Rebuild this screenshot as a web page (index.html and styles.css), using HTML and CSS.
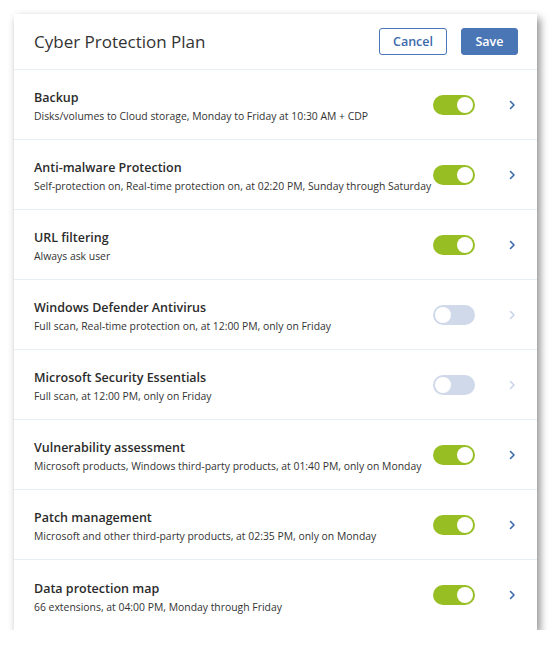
FILE: index.html
```html
<!DOCTYPE html>
<html>
<head>
<meta charset="utf-8">
<link rel="stylesheet" href="styles.css">
</head>
<body>
<div class="panel">
  <div class="header">
    <div class="title">Cyber Protection Plan</div>
    <div class="actions">
      <button class="btn btn-cancel">Cancel</button>
      <button class="btn btn-save">Save</button>
    </div>
  </div>
  <div class="row">
    <div class="info"><div class="name">Backup</div><div class="desc">Disks/volumes to Cloud storage, Monday to Friday at 10:30 AM + CDP</div></div>
    <div class="toggle on"><span class="knob"></span></div>
    <svg class="chev" viewBox="0 0 8 12"><path d="M2.5 2.5 L6 6 L2.5 9.5"/></svg>
  </div>
  <div class="row">
    <div class="info"><div class="name">Anti-malware Protection</div><div class="desc">Self-protection on, Real-time protection on, at 02:20 PM, Sunday through Saturday</div></div>
    <div class="toggle on"><span class="knob"></span></div>
    <svg class="chev" viewBox="0 0 8 12"><path d="M2.5 2.5 L6 6 L2.5 9.5"/></svg>
  </div>
  <div class="row">
    <div class="info"><div class="name">URL filtering</div><div class="desc">Always ask user</div></div>
    <div class="toggle on"><span class="knob"></span></div>
    <svg class="chev" viewBox="0 0 8 12"><path d="M2.5 2.5 L6 6 L2.5 9.5"/></svg>
  </div>
  <div class="row">
    <div class="info"><div class="name">Windows Defender Antivirus</div><div class="desc">Full scan, Real-time protection on, at 12:00 PM, only on Friday</div></div>
    <div class="toggle off"><span class="knob"></span></div>
    <svg class="chev dim" viewBox="0 0 8 12"><path d="M2.5 2.5 L6 6 L2.5 9.5"/></svg>
  </div>
  <div class="row">
    <div class="info"><div class="name">Microsoft Security Essentials</div><div class="desc">Full scan, at 12:00 PM, only on Friday</div></div>
    <div class="toggle off"><span class="knob"></span></div>
    <svg class="chev dim" viewBox="0 0 8 12"><path d="M2.5 2.5 L6 6 L2.5 9.5"/></svg>
  </div>
  <div class="row">
    <div class="info"><div class="name">Vulnerability assessment</div><div class="desc">Microsoft products, Windows third-party products, at 01:40 PM, only on Monday</div></div>
    <div class="toggle on"><span class="knob"></span></div>
    <svg class="chev" viewBox="0 0 8 12"><path d="M2.5 2.5 L6 6 L2.5 9.5"/></svg>
  </div>
  <div class="row">
    <div class="info"><div class="name">Patch management</div><div class="desc">Microsoft and other third-party products, at 02:35 PM, only on Monday</div></div>
    <div class="toggle on"><span class="knob"></span></div>
    <svg class="chev" viewBox="0 0 8 12"><path d="M2.5 2.5 L6 6 L2.5 9.5"/></svg>
  </div>
  <div class="row last">
    <div class="info"><div class="name">Data protection map</div><div class="desc">66 extensions, at 04:00 PM, Monday through Friday</div></div>
    <div class="toggle on"><span class="knob"></span></div>
    <svg class="chev" viewBox="0 0 8 12"><path d="M2.5 2.5 L6 6 L2.5 9.5"/></svg>
  </div>
</div>
</body>
</html>
```
FILE: styles.css
```css
html, body {
  margin: 0;
  padding: 0;
  background: #ffffff;
}
body {
  font-family: "Open Sans", "Noto Sans", sans-serif;
  color: #2f2f2f;
  padding: 14px 0 0 14px;
}
.panel {
  width: 523px;
  background: #ffffff;
  box-shadow: 3px 4px 8px rgba(0, 0, 0, 0.45);
}
.header {
  height: 55px;
  display: flex;
  align-items: center;
  justify-content: space-between;
  padding: 0 19px 0 20px;
  border-bottom: 1px solid #e8eef6;
}
.title {
  font-size: 17px;
  color: #333333;
}
.actions {
  display: flex;
  gap: 14px;
}
.btn {
  height: 27px;
  border-radius: 3px;
  font-family: "Open Sans", sans-serif;
  font-weight: 600;
  font-size: 12.5px;
  padding: 0;
  cursor: pointer;
}
.btn-cancel {
  width: 68px;
  background: #ffffff;
  color: #3b6aab;
  border: 1px solid #4a76b5;
}
.btn-save {
  width: 57px;
  background: #4b76b6;
  color: #ffffff;
  border: 1px solid #4b76b6;
}
.row {
  height: 69px;
  display: flex;
  align-items: center;
  padding: 0 20px;
  border-bottom: 1px solid #e8eef6;
}
.row.last {
  border-bottom: none;
  height: 70px;
}
.info {
  flex: 1;
  min-width: 0;
  padding-top: 4px;
}
.name {
  font-weight: 600;
  font-size: 12.5px;
  color: #2b2b2b;
  line-height: 17px;
}
.desc {
  font-size: 10.4px;
  color: #333333;
  line-height: 16px;
  margin-top: 2px;
  white-space: nowrap;
}
.toggle {
  width: 42px;
  height: 20px;
  border-radius: 10px;
  position: relative;
  flex: none;
  margin-right: 33px;
}
.toggle.on {
  background: #97bf23;
}
.toggle.off {
  background: #cfd9ea;
}
.knob {
  position: absolute;
  top: 2px;
  width: 16px;
  height: 16px;
  border-radius: 50%;
  background: #ffffff;
}
.toggle.on .knob {
  right: 2px;
}
.toggle.off .knob {
  left: 2px;
}
.chev {
  width: 8px;
  height: 12px;
  flex: none;
  fill: none;
  stroke: #3b6aab;
  stroke-width: 1.6;
  stroke-linecap: round;
  stroke-linejoin: round;
  margin-right: 1px;
}
.chev.dim {
  stroke: #c9d4e7;
}
```
